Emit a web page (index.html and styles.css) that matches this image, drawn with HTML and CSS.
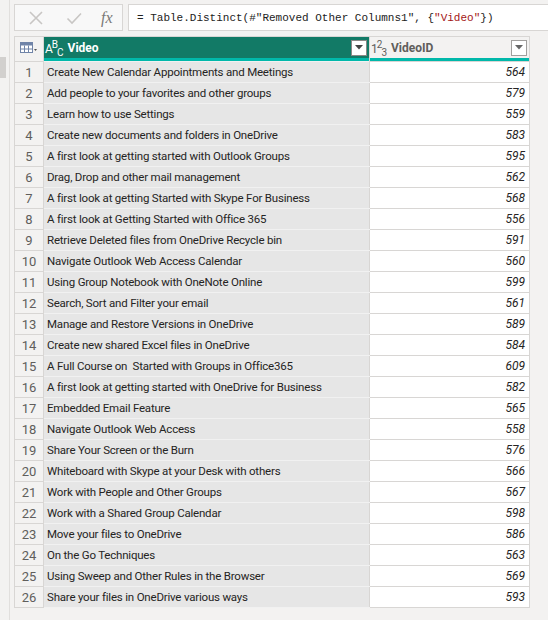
FILE: index.html
```html
<!DOCTYPE html>
<html>
<head>
<meta charset="utf-8">
<link rel="stylesheet" href="styles.css">
</head>
<body>
<div class="app">
  <div class="rail"><div class="thumb"></div></div>
  <div class="main">
    <div class="formula-bar">
      <div class="fb-buttons">
        <svg class="fb-icon x" width="16" height="16" viewBox="0 0 16 16"><path d="M2 2 L14 14 M14 2 L2 14" stroke="#c8c6c4" stroke-width="1.6" fill="none"/></svg>
        <svg class="fb-icon check" width="16" height="16" viewBox="0 0 16 16"><path d="M1.5 8.5 L6 13 L15 3.5" stroke="#c8c6c4" stroke-width="1.6" fill="none"/></svg>
        <span class="fx">fx</span>
      </div>
      <div class="fb-input"><span class="code">= Table.Distinct(#"Removed Other Columns1", {<span class="str">"Video"</span>})</span></div>
    </div>
    <table class="grid">
      <colgroup><col class="c-idx"><col class="c-video"><col class="c-id"></colgroup>
      <thead>
        <tr>
          <th class="h-idx">
            <svg width="18" height="12" viewBox="0 0 18 12"><rect x="0.5" y="0.5" width="12" height="10" fill="#fff" stroke="#7084a8"/><rect x="0.5" y="0.5" width="12" height="3" fill="#7084a8"/><path d="M4.5 3.5 V10.5 M8.5 3.5 V10.5 M0.5 7 H12.5" stroke="#7084a8" stroke-width="1"/><path d="M14 7 L17 7 L15.5 9 Z" fill="#555"/></svg>
          </th>
          <th class="h-video">
            <div class="h-inner">
              <span class="type-abc">A<sup>B</sup><sub>C</sub></span>
              <span class="h-label">Video</span>
              <span class="dd dd-sel"><svg width="8" height="5" viewBox="0 0 8 5"><path d="M0 0 H8 L4 4.5 Z" fill="#444"/></svg></span>
            </div>
          </th>
          <th class="h-id">
            <div class="h-inner">
              <span class="type-123">1<sup>2</sup><sub>3</sub></span>
              <span class="h-label">VideoID</span>
              <span class="dd"><svg width="8" height="5" viewBox="0 0 8 5"><path d="M0 0 H8 L4 4.5 Z" fill="#666"/></svg></span>
            </div>
          </th>
        </tr>
        <tr class="stripe"><td class="s-idx"></td><td class="s-col"></td><td class="s-col"></td></tr>
      </thead>
      <tbody>
        <tr><td class="idx">1</td><td class="video">Create New Calendar Appointments and Meetings</td><td class="num">564</td></tr>
        <tr><td class="idx">2</td><td class="video">Add people to your favorites and other groups</td><td class="num">579</td></tr>
        <tr><td class="idx">3</td><td class="video">Learn how to use Settings</td><td class="num">559</td></tr>
        <tr><td class="idx">4</td><td class="video">Create new documents and folders in OneDrive</td><td class="num">583</td></tr>
        <tr><td class="idx">5</td><td class="video">A first look at getting started with Outlook Groups</td><td class="num">595</td></tr>
        <tr><td class="idx">6</td><td class="video">Drag, Drop and other mail management</td><td class="num">562</td></tr>
        <tr><td class="idx">7</td><td class="video">A first look at getting Started with Skype For Business</td><td class="num">568</td></tr>
        <tr><td class="idx">8</td><td class="video">A first look at Getting Started with Office 365</td><td class="num">556</td></tr>
        <tr><td class="idx">9</td><td class="video">Retrieve Deleted files from OneDrive Recycle bin</td><td class="num">591</td></tr>
        <tr><td class="idx">10</td><td class="video">Navigate Outlook Web Access Calendar</td><td class="num">560</td></tr>
        <tr><td class="idx">11</td><td class="video">Using Group Notebook with OneNote Online</td><td class="num">599</td></tr>
        <tr><td class="idx">12</td><td class="video">Search, Sort and Filter your email</td><td class="num">561</td></tr>
        <tr><td class="idx">13</td><td class="video">Manage and Restore Versions in OneDrive</td><td class="num">589</td></tr>
        <tr><td class="idx">14</td><td class="video">Create new shared Excel files in OneDrive</td><td class="num">584</td></tr>
        <tr><td class="idx">15</td><td class="video">A Full Course on&nbsp; Started with Groups in Office365</td><td class="num">609</td></tr>
        <tr><td class="idx">16</td><td class="video">A first look at getting started with OneDrive for Business</td><td class="num">582</td></tr>
        <tr><td class="idx">17</td><td class="video">Embedded Email Feature</td><td class="num">565</td></tr>
        <tr><td class="idx">18</td><td class="video">Navigate Outlook Web Access</td><td class="num">558</td></tr>
        <tr><td class="idx">19</td><td class="video">Share Your Screen or the Burn</td><td class="num">576</td></tr>
        <tr><td class="idx">20</td><td class="video">Whiteboard with Skype at your Desk with others</td><td class="num">566</td></tr>
        <tr><td class="idx">21</td><td class="video">Work with People and Other Groups</td><td class="num">567</td></tr>
        <tr><td class="idx">22</td><td class="video">Work with a Shared Group Calendar</td><td class="num">598</td></tr>
        <tr><td class="idx">23</td><td class="video">Move your files to OneDrive</td><td class="num">586</td></tr>
        <tr><td class="idx">24</td><td class="video">On the Go Techniques</td><td class="num">563</td></tr>
        <tr><td class="idx">25</td><td class="video">Using Sweep and Other Rules in the Browser</td><td class="num">569</td></tr>
        <tr><td class="idx">26</td><td class="video">Share your files in OneDrive various ways</td><td class="num">593</td></tr>
      </tbody>
    </table>
  </div>
</div>
</body>
</html>
```

FILE: styles.css
```css
html, body {
  margin: 0;
  padding: 0;
  background: #f3f2f1;
  font-family: Roboto, "Liberation Sans", Arial, sans-serif;
  font-size: 12px;
  color: #323130;
}
.app {
  display: flex;
  height: 620px;
  overflow: hidden;
}
.rail {
  width: 9px;
  flex: 0 0 9px;
  border-right: 1px solid #e1dfdd;
}
.thumb {
  margin-top: 57px;
  width: 6px;
  height: 21px;
  background: #d2d0ce;
}
.main {
  flex: 1;
  padding: 4px 0 0 4px;
  min-width: 0;
}
.formula-bar {
  display: flex;
  height: 27px;
  gap: 5px;
}
.fb-buttons {
  width: 109px;
  flex: 0 0 109px;
  border: 1px solid #d8d6d4;
  background: #f8f8f8;
  display: flex;
  align-items: center;
  box-sizing: border-box;
  height: 27px;
}
.fb-icon.x { margin-left: 13px; }
.fb-icon.check { margin-left: 22px; }
.fx {
  margin-left: 19px;
  font-family: "Liberation Serif", "Times New Roman", serif;
  font-style: italic;
  font-size: 16px;
  color: #7a7877;
}
.fb-input {
  flex: 1;
  border: 1px solid #d8d6d4;
  border-right: none;
  background: #fff;
  box-sizing: border-box;
  height: 27px;
  display: flex;
  align-items: center;
  padding-left: 8px;
}
.code {
  font-family: "Liberation Mono", "DejaVu Sans Mono", monospace;
  font-size: 11px;
  color: #222;
  white-space: nowrap;
}
.str { color: #a31515; }

.grid {
  margin-top: 5px;
  border-collapse: collapse;
  table-layout: fixed;
  width: 515px;
}
.c-idx { width: 29px; }
.c-video { width: 326px; }
.c-id { width: 160px; }

.grid th {
  height: 21px;
  padding: 0;
  border-top: 1px solid #d8d6d4;
  text-align: left;
  font-weight: bold;
}
.h-idx {
  background: #f3f2f1;
  border-left: 1px solid #d8d6d4;
  vertical-align: middle;
}
.h-idx svg { display: block; margin: 1px 0 0 5px; }
.h-video {
  background: #127a66;
  color: #fff;
  border-left: 1px solid #d8d6d4;
}
.h-id {
  background: #f3f2f1;
  color: #605e5c;
  border-left: 1px solid #d8d6d4;
  border-right: 1px solid #d8d6d4;
}
.h-inner {
  display: flex;
  align-items: center;
  height: 21px;
  padding: 0 2px 0 1px;
}
.type-abc, .type-123 {
  font-weight: normal;
  font-size: 12px;
  line-height: 1;
  position: relative;
  top: 1px;
  margin-right: 4px;
  white-space: nowrap;
}
.type-abc sup, .type-123 sup {
  font-size: 10px;
  vertical-align: 5px;
  margin-left: -1px;
}
.type-abc sub, .type-123 sub {
  font-size: 10px;
  vertical-align: -3px;
  margin-left: -1px;
}
.type-abc { color: #fff; }
.type-123 { color: #605e5c; }
.h-label { flex: 1; }
.dd {
  width: 14px;
  height: 14px;
  border: 1px solid #a19f9d;
  background: #fff;
  display: flex;
  align-items: center;
  justify-content: center;
}
.dd-sel { border-color: #8a8886; }

.stripe td {
  height: 3px;
  padding: 0;
}
.stripe .s-idx {
  background: #f3f2f1;
  border-left: 1px solid #d8d6d4;
}
.stripe .s-col {
  background: #01b8aa;
  border-left: 1px solid #d8d6d4;
}
.stripe td:last-child { border-right: 1px solid #d8d6d4; }

tbody td {
  height: 20px;
  padding: 0;
  border: 1px solid #d8d6d4;
  white-space: nowrap;
  overflow: hidden;
}
.idx {
  background: #f3f2f1;
  color: #605e5c;
  text-align: center;
  font-size: 13px;
}
.video {
  background: #e6e6e6;
  padding-left: 3px;
  color: #252423;
  font-size: 11.5px;
  letter-spacing: -0.2px;
  border-top-color: #f1f1f1;
  border-bottom-color: #f1f1f1;
}
.num {
  background: #fff;
  text-align: right;
  font-style: italic;
  padding-right: 4px;
  color: #252423;
}
```
